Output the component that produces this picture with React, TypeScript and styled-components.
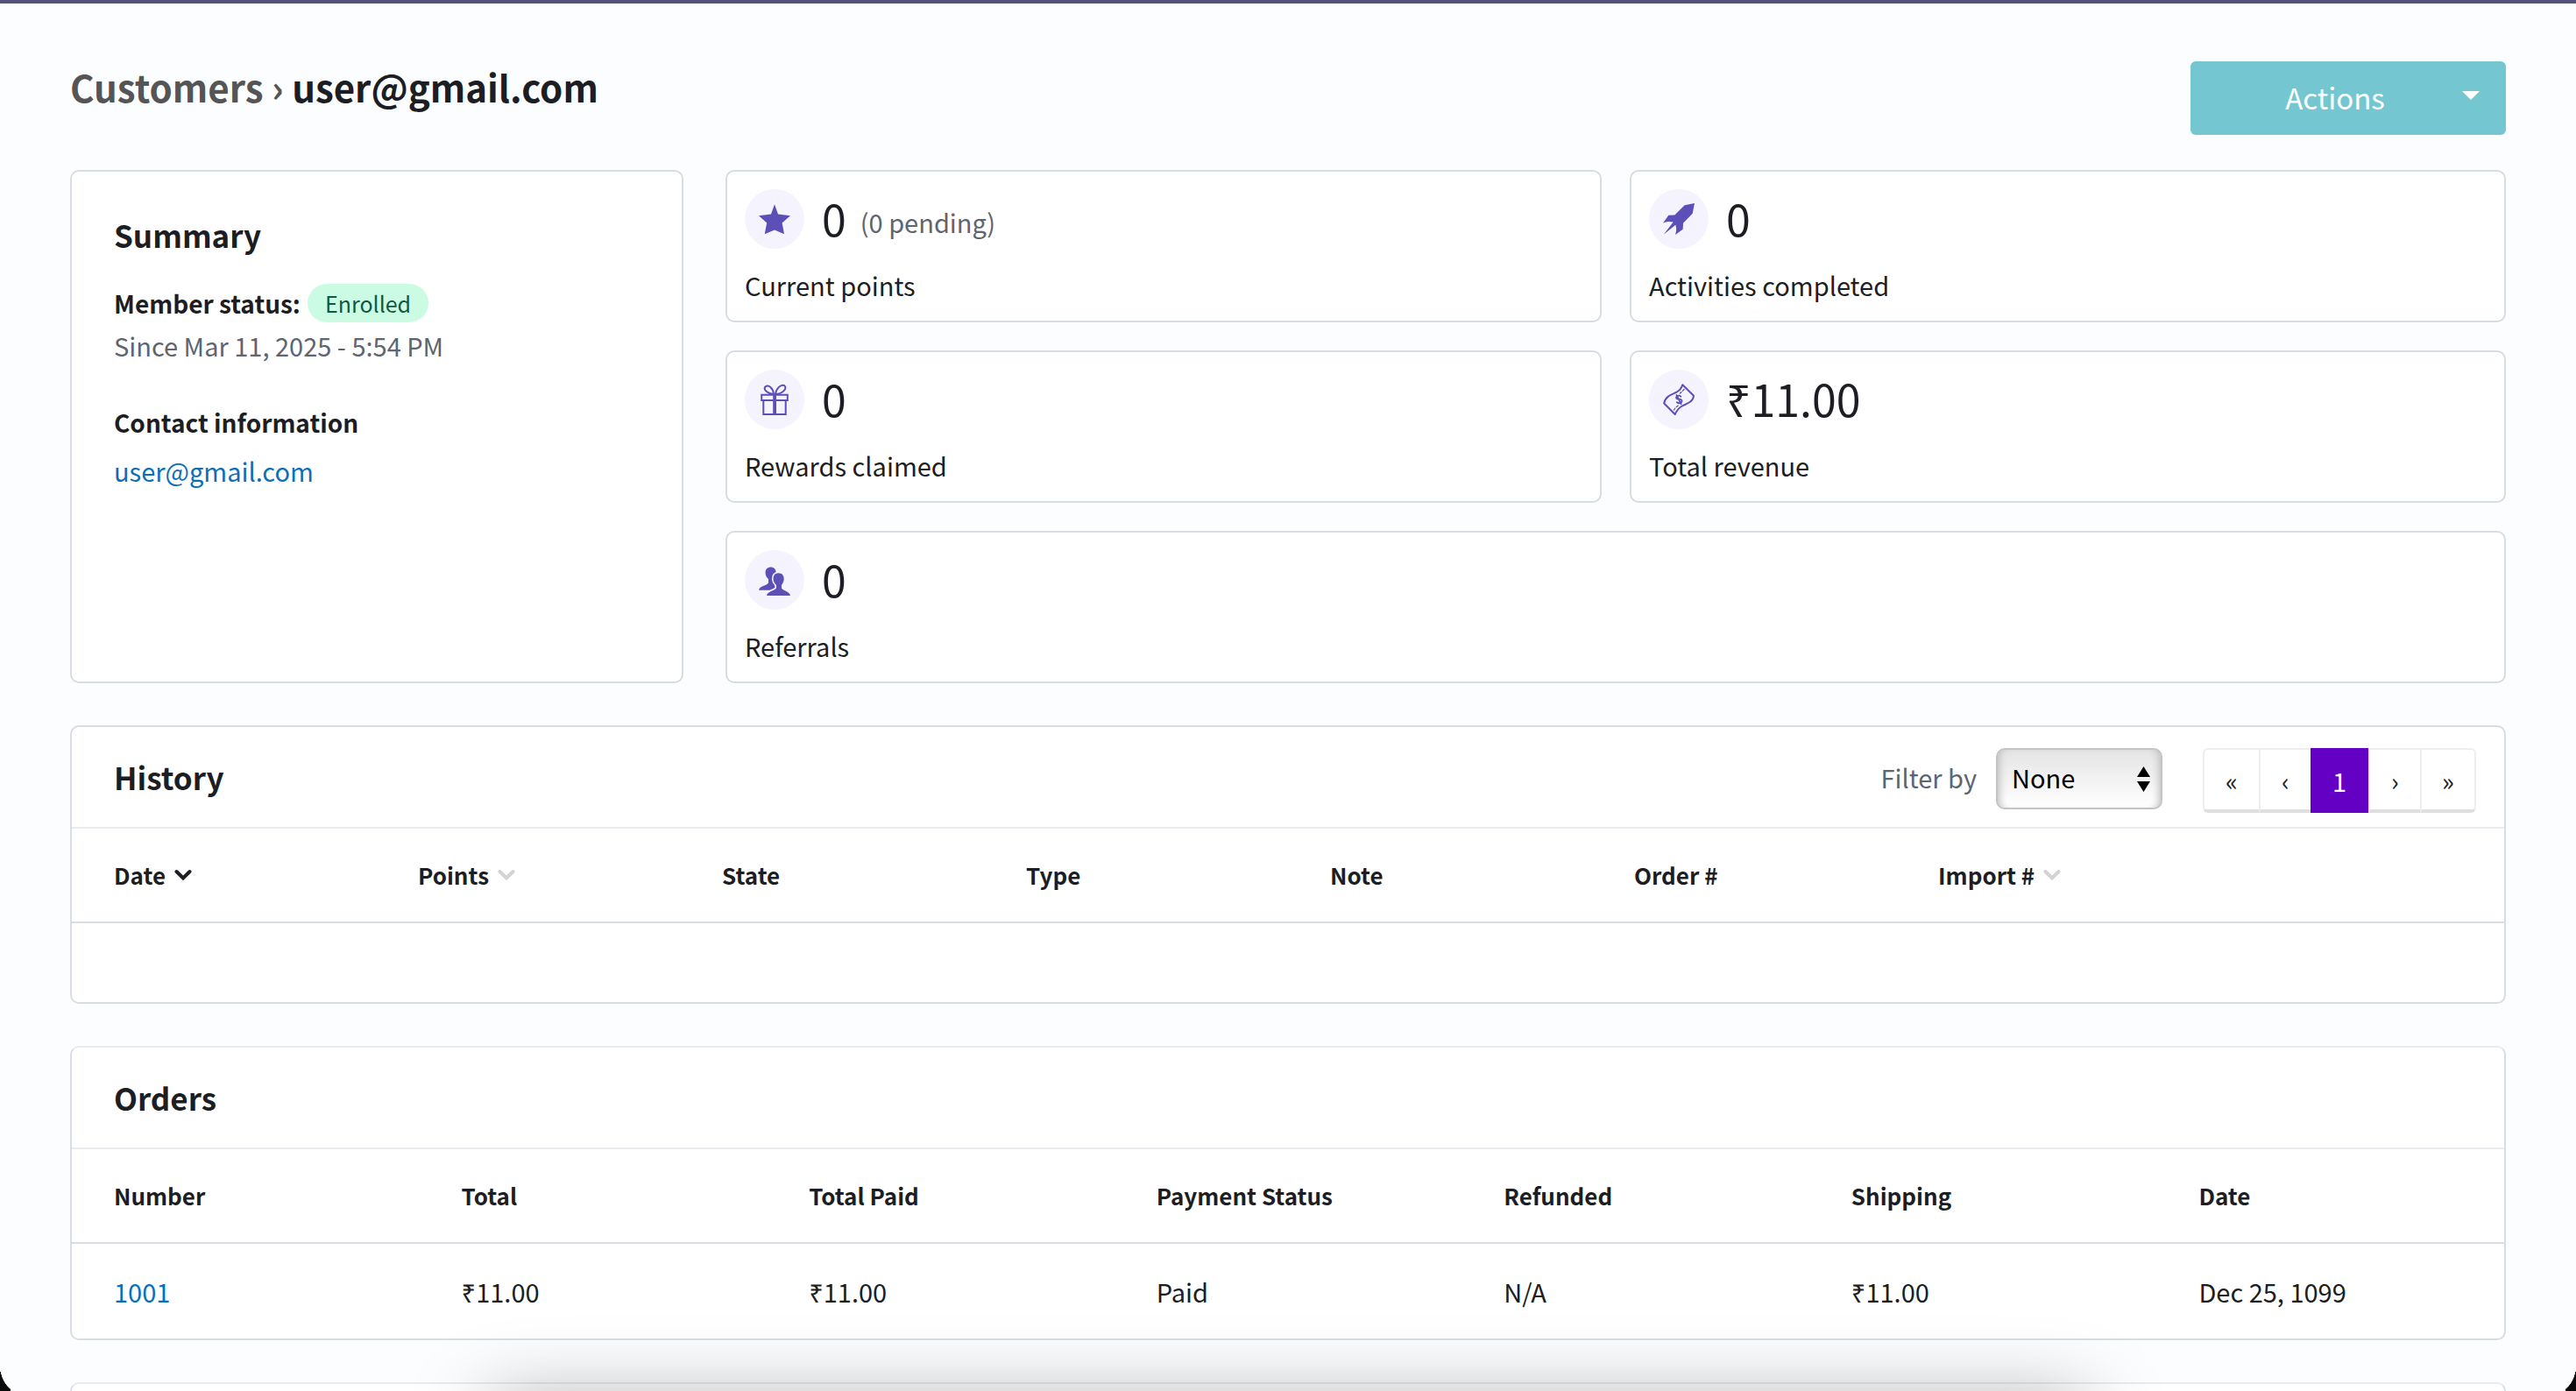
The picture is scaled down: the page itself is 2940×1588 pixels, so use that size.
import React from "react";
import styled, { createGlobalStyle } from "styled-components";

const color = {
  page: "#fcfdff",
  ink: "#1c1e23",
  muted: "#5d6570",
  crumb: "#555555",
  link: "#0b6fb8",
  line: "#d8dce3",
  softLine: "#e9ebf0",
  accent: "#5c50b8",
  accentTint: "#f4f3fe",
  teal: "#74c7d1",
  purple: "#6400c3",
};

const GlobalStyle = createGlobalStyle`
  *, *::before, *::after { box-sizing: border-box; }
  body {
    margin: 0;
    background: ${color.page};
    color: ${color.ink};
    font-family: "Noto Sans CJK SC", "Noto Sans", sans-serif;
    font-size: 29px;
    line-height: 48px;
  }
  h1, h2, h3, p { margin: 0; }
  button, select { font: inherit; color: inherit; }
`;

const Page = styled.div`
  position: relative;
  display: flex;
  flex-direction: column;
  min-height: 100vh;
  overflow: hidden;
  border-top: 4px solid #52527a;
  padding: 66px 80px 0;
`;

const PageHeader = styled.header`
  display: flex;
  justify-content: space-between;
  align-items: flex-start;
  margin-bottom: 40px;
`;

const Title = styled.h1`
  font-size: 42px;
  font-weight: 600;
  line-height: 58px;
`;

const Crumb = styled.a`
  color: ${color.crumb};
  text-decoration: none;
`;

const CrumbMark = styled.span`
  color: ${color.crumb};
`;

const ActionsButton = styled.button`
  display: flex;
  align-items: center;
  width: 360px;
  height: 84px;
  padding: 0 30px 0 20px;
  border: 0;
  border-radius: 6px;
  background: ${color.teal};
  color: #ffffff;
  font-size: 33px;
  cursor: pointer;
`;

const ActionsLabel = styled.span`
  flex: 1;
  padding-bottom: 2px;
  text-align: center;
`;

const Stack = styled.main`
  display: flex;
  flex: 1;
  flex-direction: column;
  gap: 48px;
`;

const Overview = styled.div`
  display: grid;
  grid-template-columns: minmax(0, 700fr) minmax(0, 2032fr);
  gap: 48px;
`;

const Card = styled.section<{ $soft?: boolean }>`
  border: 2px solid ${color.line};
  border-top-color: ${(p) => (p.$soft ? color.softLine : color.line)};
  border-radius: 10px;
  background: #ffffff;
`;

const CutCard = styled(Card)`
  flex: 1;
  border-bottom: 0;
  border-radius: 10px 10px 0 0;
`;

const SummaryCard = styled(Card)`
  padding: 48px;
`;

const Heading = styled.h2`
  font-size: 35px;
  font-weight: 600;
  line-height: 48px;
`;

const StatusLine = styled.div`
  display: flex;
  align-items: center;
  gap: 8px;
  margin-top: 30px;
`;

const Strong = styled.h3`
  font-size: 28px;
  font-weight: 600;
  line-height: 48px;
`;

const Badge = styled.span`
  padding: 0 20px;
  border-radius: 22px;
  background: #ccfbe3;
  color: #0d5a43;
  font-size: 25px;
  line-height: 44px;
`;

const Muted = styled.p`
  color: ${color.muted};
`;

const Contact = styled.div`
  display: flex;
  flex-direction: column;
  align-items: flex-start;
  gap: 7px;
  margin-top: 40px;
`;

const Link = styled.a`
  color: ${color.link};
  text-decoration: none;
`;

const Stats = styled.div`
  display: grid;
  grid-template-columns: 1fr 1fr;
  gap: 32px;
`;

const StatCard = styled(Card)<{ $wide?: boolean }>`
  display: flex;
  flex-direction: column;
  gap: 20px;
  padding: 20px;
  grid-column: ${(p) => (p.$wide ? "1 / -1" : "auto")};
`;

const StatTop = styled.div`
  display: flex;
  align-items: center;
`;

const IconDisc = styled.span`
  display: grid;
  place-items: center;
  width: 68px;
  height: 68px;
  margin-right: 20px;
  border-radius: 50%;
  background: ${color.accentTint};
  color: ${color.accent};
`;

const StatValue = styled.span`
  font-size: 50px;
  line-height: 64px;
  padding-bottom: 4px;
`;

const StatNote = styled.span`
  margin-left: 16px;
  padding-top: 6px;
  line-height: 60px;
  color: ${color.muted};
`;

const StatLabel = styled.p`
  line-height: 42px;
`;

const CardHead = styled.div`
  display: flex;
  align-items: center;
  justify-content: space-between;
  height: 116px;
  padding: 0 32px 0 48px;
  border-bottom: 2px solid ${color.softLine};
`;

const Tools = styled.div`
  display: flex;
  align-items: center;
`;

const FilterLabel = styled.label`
  margin-right: 22px;
  color: ${color.muted};
`;

const SelectBox = styled.span`
  display: grid;
  align-items: center;
  margin-top: 4px;
  margin-right: 46px;
  svg {
    grid-area: 1 / 1;
    justify-self: end;
    margin-right: 14px;
    pointer-events: none;
  }
`;

const Select = styled.select`
  grid-area: 1 / 1;
  appearance: none;
  width: 190px;
  height: 70px;
  padding: 0 16px 4px;
  border: 2px solid #c4c4c4;
  border-radius: 10px;
  background: linear-gradient(#e4e4e4, #ffffff);
  box-shadow: inset 8px 0 8px -6px #bdbdbd, inset -8px 0 8px -6px #bdbdbd;
  color: #000000;
`;

const Pager = styled.nav`
  display: flex;
  margin-top: 8px;
`;

const PageButton = styled.button<{ $current?: boolean; $wide?: boolean }>`
  width: ${(p) => (p.$current ? 66 : p.$wide ? 64 : 59)}px;
  height: 74px;
  padding: 0;
  border: 2px solid #eeeeee;
  border-bottom: 4px solid #dfdfdf;
  border-right-width: 0;
  background: #ffffff;
  color: #222222;
  line-height: 48px;
  cursor: pointer;
  &:first-child { border-radius: 6px 0 0 6px; }
  &:last-child { border-right-width: 2px; border-radius: 0 6px 6px 0; }
  ${(p) => p.$current && `border: 0; background: ${color.purple}; color: #ffffff;`}
`;

const Table = styled.table`
  width: 100%;
  table-layout: fixed;
  border-collapse: separate;
  border-spacing: 0;
`;

const Th = styled.th`
  height: 108px;
  padding: 0 0 0 48px;
  border-bottom: 2px solid ${color.line};
  font-size: 26px;
  font-weight: 600;
  text-align: left;
`;

const Td = styled.td`
  height: 108px;
  padding: 0 0 0 48px;
`;

const EmptyTd = styled.td`
  height: 90px;
  padding: 0;
`;

const SortButton = styled.button<{ $active?: boolean }>`
  display: flex;
  align-items: center;
  gap: 10px;
  padding: 0;
  border: 0;
  background: none;
  cursor: pointer;
  svg { color: ${(p) => (p.$active ? color.ink : "#d3d3d3")}; }
`;

const DockShadow = styled.div`
  position: fixed;
  top: 100vh;
  left: 19%;
  right: 19%;
  height: 80px;
  margin-top: 14px;
  box-shadow: 0 0 90px rgba(0, 0, 0, 0.35);
  pointer-events: none;
`;

const Corner = styled.span<{ $side: "left" | "right" }>`
  position: fixed;
  bottom: 0;
  ${(p) => p.$side}: 0;
  width: 12px;
  height: 22px;
  background: radial-gradient(
    ellipse 28px 32px at ${(p) => (p.$side === "left" ? "28px" : "-16px")} -6px,
    transparent 98%,
    #0a0a0a 100%
  );
`;

const StarIcon = () => (
  <svg width="36" height="36" viewBox="0 0 36 36" fill="currentColor" aria-hidden="true">
    <path d="M18 1.3 22 12.6 36 14.3 26.6 22.4 29 35.3 18 30.6 6.7 35.3 9.2 22.4 0 14.3 14 12.6Z" />
  </svg>
);

const RocketIcon = () => (
  <svg width="36" height="36" viewBox="0 0 36 36" fill="currentColor" aria-hidden="true">
    <path d="M36 0 24.7 2.3 13.3 13.5 6.3 13.7 0 22.7C4 20.6 8 20.6 11.6 21.6L.7 35.7 14.3 24.7C15.6 28.5 15.4 32 14 36L22.7 29.7 23 22.7 33.7 11.7Z" />
  </svg>
);

const GiftIcon = () => (
  <svg width="36" height="36" viewBox="0 0 36 36" fill="none" stroke="currentColor" strokeWidth="2" aria-hidden="true">
    <path d="M3.2 12.8h29.600v6.200H3.2zM5.3 19v16h25.400V19" />
    <path d="M16.2 11.500h3.800v24h-3.800z" fill="currentColor" stroke="none" />
    <path d="M17 12C9 11 5 6.500 7.500 3.500 11 .5 16.500 5 17 12ZM19 12C19.500 6 25 .3 29 2 33 5 28 11.500 19 12Z" />
  </svg>
);

const MoneyIcon = () => (
  <svg width="36" height="36" viewBox="0 0 36 36" fill="none" stroke="currentColor" strokeWidth="2" strokeLinecap="round" strokeLinejoin="round" aria-hidden="true">
    <path d="M22.3 1.300 35 13.700C34.500 21.500 26 23 21 26 17 28.500 15.500 31 13.700 35L1.200 22.500C2.500 14.500 9.500 12.500 15 10 19.500 7.500 21.300 5 22.300 1.300Z" />
    <path d="M20.300 14.700C18 12.500 14.300 14.300 15.300 16.700 16.200 19 20 16.300 21.300 18.800 22.300 21.500 18.500 23.500 15.800 21.200M15.500 13l5.200 10.300" strokeWidth="1.800" />
    <path d="M19.500 11l1.600-1.400M22.500 8.200l1.600-1.900M12.500 30l1.400-2M15.300 26.600l2-1.500" strokeWidth="1.300" />
  </svg>
);

const PeopleIcon = () => (
  <svg width="36" height="36" viewBox="0 0 36 36" fill="currentColor" aria-hidden="true">
    <path d="M13.7 3.5C17.5 3.5 19.8 6 19.6 10 19.5 12.5 18 14.5 17 16V21C18 23 21 25 21 29.7H0C1 25 9 24.5 11 21.5V17C9.5 16 7.8 13.5 7.6 10.5 7.3 6 9.8 3.5 13.7 3.5Z" />
    <path
      d="M22.5 10.2C26.5 10.2 29 13 28.7 17.5 28.5 20.5 27 22.5 26 24V27.5C28 30.5 35 31 36 36H9C10 31 17.5 30.5 20 27.5V24C18.5 22.5 16.8 20.5 16.6 17.5 16.3 13 18.5 10.2 22.5 10.2Z"
      stroke={color.accentTint}
      strokeWidth="3.4"
      paintOrder="stroke"
    />
  </svg>
);

const Chevron = () => (
  <svg width="20" height="14" viewBox="0 0 20 14" fill="none" stroke="currentColor" strokeWidth="4" strokeLinecap="round" aria-hidden="true">
    <path d="M2.5 3 10 10.5 17.5 3" />
  </svg>
);

const Caret = () => (
  <svg width="20" height="16" viewBox="0 0 20 16" fill="currentColor" aria-hidden="true">
    <path d="M0 0h20L10 10z" />
  </svg>
);

const SelectArrows = () => (
  <svg width="15" height="29" viewBox="0 0 15 29" aria-hidden="true">
    <path d="M7.5 0 15 12H0zM0 17h15L7.5 29z" />
  </svg>
);

const stats = [
  { icon: <StarIcon />, value: "0", note: "(0 pending)", label: "Current points" },
  { icon: <RocketIcon />, value: "0", label: "Activities completed" },
  { icon: <GiftIcon />, value: "0", label: "Rewards claimed" },
  { icon: <MoneyIcon />, value: "₹11.00", label: "Total revenue" },
  { icon: <PeopleIcon />, value: "0", label: "Referrals", wide: true },
];

const historyColumns = [
  { name: "Date", sortable: true, active: true },
  { name: "Points", sortable: true },
  { name: "State" },
  { name: "Type" },
  { name: "Note" },
  { name: "Order #" },
  { name: "Import #", sortable: true },
  { name: "" },
];

const orderColumns = ["Number", "Total", "Total Paid", "Payment Status", "Refunded", "Shipping", "Date"];
const orders = [["1001", "₹11.00", "₹11.00", "Paid", "N/A", "₹11.00", "Dec 25, 1099"]];

export default function App() {
  return (
    <Page>
      <GlobalStyle />
      <PageHeader>
        <Title>
          <Crumb href="#customers">Customers</Crumb> <CrumbMark>›</CrumbMark> user@gmail.com
        </Title>
        <ActionsButton type="button" aria-haspopup="menu">
          <ActionsLabel>Actions</ActionsLabel>
          <Caret />
        </ActionsButton>
      </PageHeader>

      <Stack>
        <Overview>
          <SummaryCard>
            <Heading>Summary</Heading>
            <StatusLine>
              <Strong>Member status:</Strong>
              <Badge>Enrolled</Badge>
            </StatusLine>
            <Muted>Since Mar 11, 2025 - 5:54 PM</Muted>
            <Contact>
              <Strong>Contact information</Strong>
              <Link href="mailto:user@gmail.com">user@gmail.com</Link>
            </Contact>
          </SummaryCard>
          <Stats>
            {stats.map((s) => (
              <StatCard key={s.label} $wide={s.wide}>
                <StatTop>
                  <IconDisc>{s.icon}</IconDisc>
                  <StatValue>{s.value}</StatValue>
                  {s.note && <StatNote>{s.note}</StatNote>}
                </StatTop>
                <StatLabel>{s.label}</StatLabel>
              </StatCard>
            ))}
          </Stats>
        </Overview>

        <Card>
          <CardHead>
            <Heading>History</Heading>
            <Tools>
              <FilterLabel htmlFor="history-filter">Filter by</FilterLabel>
              <SelectBox>
                <Select id="history-filter" defaultValue="none">
                  <option value="none">None</option>
                </Select>
                <SelectArrows />
              </SelectBox>
              <Pager aria-label="History pages">
                <PageButton type="button" $wide aria-label="First page">«</PageButton>
                <PageButton type="button" aria-label="Previous page">‹</PageButton>
                <PageButton type="button" $current aria-current="page">1</PageButton>
                <PageButton type="button" aria-label="Next page">›</PageButton>
                <PageButton type="button" $wide aria-label="Last page">»</PageButton>
              </Pager>
            </Tools>
          </CardHead>
          <Table>
            <thead>
              <tr>
                {historyColumns.map((c) => (
                  <Th key={c.name} scope="col">
                    {c.sortable ? (
                      <SortButton type="button" $active={c.active}>
                        {c.name}
                        <Chevron />
                      </SortButton>
                    ) : (
                      c.name
                    )}
                  </Th>
                ))}
              </tr>
            </thead>
            <tbody>
              <tr>
                <EmptyTd colSpan={historyColumns.length} />
              </tr>
            </tbody>
          </Table>
        </Card>

        <Card $soft>
          <CardHead>
            <Heading>Orders</Heading>
          </CardHead>
          <Table>
            <thead>
              <tr>
                {orderColumns.map((c) => (
                  <Th key={c} scope="col">{c}</Th>
                ))}
              </tr>
            </thead>
            <tbody>
              {orders.map((row) => (
                <tr key={row[0]}>
                  {row.map((cell, i) => (
                    <Td key={orderColumns[i]}>{i === 0 ? <Link href={`#order-${cell}`}>{cell}</Link> : cell}</Td>
                  ))}
                </tr>
              ))}
            </tbody>
          </Table>
        </Card>

        <CutCard $soft />
      </Stack>

      <DockShadow />
      <Corner $side="left" />
      <Corner $side="right" />
    </Page>
  );
}
